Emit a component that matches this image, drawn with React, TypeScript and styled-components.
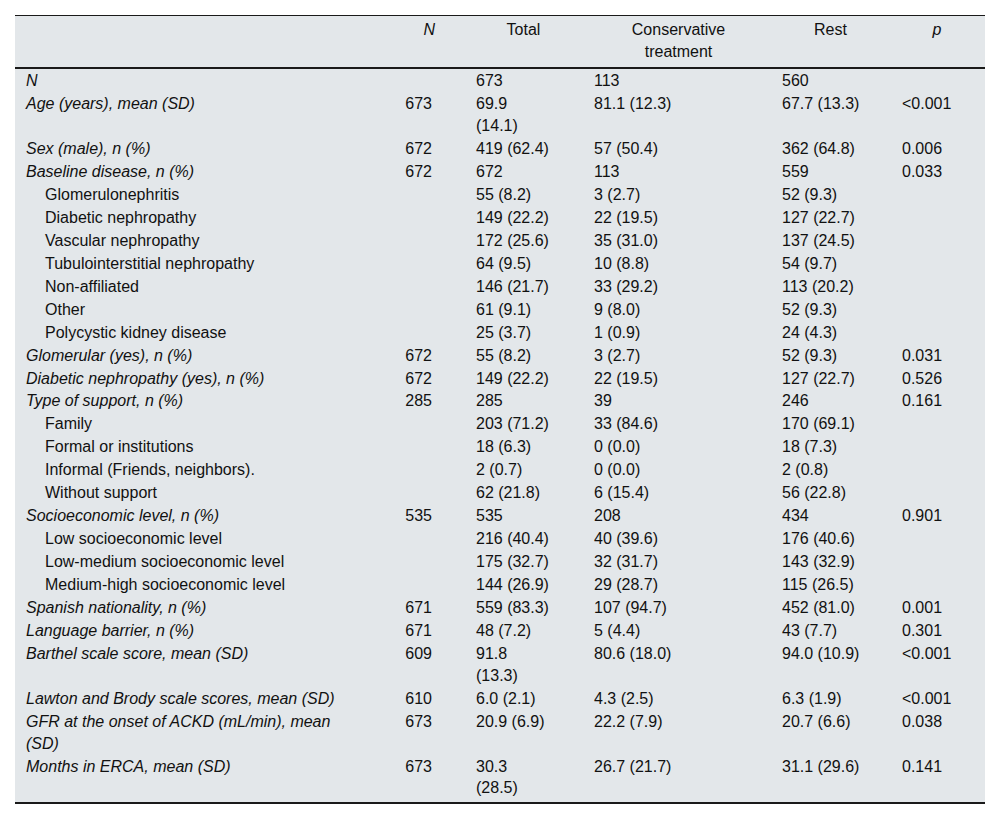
import React from "react";
import styled, { createGlobalStyle } from "styled-components";

const GlobalStyle = createGlobalStyle`
  html, body { margin: 0; padding: 0; background: #ffffff; }
  body { font-family: "Liberation Sans", Arial, Helvetica, sans-serif; }
`;

const Page = styled.div`
  padding: 15px 15px 0 15px;
`;

const TableBox = styled.div`
  background: #e3e7ea;
  border-top: 1px solid #1a1a1a;
  border-bottom: 2px solid #1a1a1a;
  padding-bottom: 2px;
`;

const Table = styled.table`
  width: 100%;
  table-layout: fixed;
  border-collapse: separate;
  border-spacing: 0;
  font-size: 16px;
  line-height: 21.7px;
  color: #111;
`;

const Th = styled.th<{ $italic?: boolean; $align?: "left" | "right" | "center"; $pr?: number }>`
  font-weight: normal;
  font-style: ${(p) => (p.$italic ? "italic" : "normal")};
  text-align: ${(p) => p.$align ?? "center"};
  vertical-align: top;
  padding: 3.15px ${(p) => p.$pr ?? 10}px 4.8px 0;
  border-bottom: 2px solid #1a1a1a;
`;

const Label = styled.td<{ $sub?: boolean; $italic?: boolean }>`
  font-style: ${(p) => (p.$italic ? "italic" : "normal")};
  padding: 0.65px 6px 0.65px ${(p) => (p.$sub ? "30px" : "11px")};
  vertical-align: top;
  white-space: nowrap;
`;

const NCell = styled.td`
  text-align: right;
  padding: 0.65px 38px 0.65px 0;
  vertical-align: top;
`;

const Val = styled.td`
  padding: 0.65px 4px 0.65px 6px;
  vertical-align: top;
  white-space: nowrap;
`;

type Row = {
  label: React.ReactNode;
  sub?: boolean;
  n?: string;
  total: React.ReactNode;
  cons: string;
  rest: string;
  p?: string;
};

const rows: Row[] = [
  { label: "N", total: "673", cons: "113", rest: "560" },
  { label: "Age (years), mean (SD)", n: "673", total: <>69.9<br />(14.1)</>, cons: "81.1 (12.3)", rest: "67.7 (13.3)", p: "<0.001" },
  { label: "Sex (male), n (%)", n: "672", total: "419 (62.4)", cons: "57 (50.4)", rest: "362 (64.8)", p: "0.006" },
  { label: "Baseline disease, n (%)", n: "672", total: "672", cons: "113", rest: "559", p: "0.033" },
  { label: "Glomerulonephritis", sub: true, total: "55 (8.2)", cons: "3 (2.7)", rest: "52 (9.3)" },
  { label: "Diabetic nephropathy", sub: true, total: "149 (22.2)", cons: "22 (19.5)", rest: "127 (22.7)" },
  { label: "Vascular nephropathy", sub: true, total: "172 (25.6)", cons: "35 (31.0)", rest: "137 (24.5)" },
  { label: "Tubulointerstitial nephropathy", sub: true, total: "64 (9.5)", cons: "10 (8.8)", rest: "54 (9.7)" },
  { label: "Non-affiliated", sub: true, total: "146 (21.7)", cons: "33 (29.2)", rest: "113 (20.2)" },
  { label: "Other", sub: true, total: "61 (9.1)", cons: "9 (8.0)", rest: "52 (9.3)" },
  { label: "Polycystic kidney disease", sub: true, total: "25 (3.7)", cons: "1 (0.9)", rest: "24 (4.3)" },
  { label: "Glomerular (yes), n (%)", n: "672", total: "55 (8.2)", cons: "3 (2.7)", rest: "52 (9.3)", p: "0.031" },
  { label: "Diabetic nephropathy (yes), n (%)", n: "672", total: "149 (22.2)", cons: "22 (19.5)", rest: "127 (22.7)", p: "0.526" },
  { label: "Type of support, n (%)", n: "285", total: "285", cons: "39", rest: "246", p: "0.161" },
  { label: "Family", sub: true, total: "203 (71.2)", cons: "33 (84.6)", rest: "170 (69.1)" },
  { label: "Formal or institutions", sub: true, total: "18 (6.3)", cons: "0 (0.0)", rest: "18 (7.3)" },
  { label: "Informal (Friends, neighbors).", sub: true, total: "2 (0.7)", cons: "0 (0.0)", rest: "2 (0.8)" },
  { label: "Without support", sub: true, total: "62 (21.8)", cons: "6 (15.4)", rest: "56 (22.8)" },
  { label: "Socioeconomic level, n (%)", n: "535", total: "535", cons: "208", rest: "434", p: "0.901" },
  { label: "Low socioeconomic level", sub: true, total: "216 (40.4)", cons: "40 (39.6)", rest: "176 (40.6)" },
  { label: "Low-medium socioeconomic level", sub: true, total: "175 (32.7)", cons: "32 (31.7)", rest: "143 (32.9)" },
  { label: "Medium-high socioeconomic level", sub: true, total: "144 (26.9)", cons: "29 (28.7)", rest: "115 (26.5)" },
  { label: "Spanish nationality, n (%)", n: "671", total: "559 (83.3)", cons: "107 (94.7)", rest: "452 (81.0)", p: "0.001" },
  { label: "Language barrier, n (%)", n: "671", total: "48 (7.2)", cons: "5 (4.4)", rest: "43 (7.7)", p: "0.301" },
  { label: "Barthel scale score, mean (SD)", n: "609", total: <>91.8<br />(13.3)</>, cons: "80.6 (18.0)", rest: "94.0 (10.9)", p: "<0.001" },
  { label: "Lawton and Brody scale scores, mean (SD)", n: "610", total: "6.0 (2.1)", cons: "4.3 (2.5)", rest: "6.3 (1.9)", p: "<0.001" },
  { label: <>GFR at the onset of ACKD (mL/min), mean<br />(SD)</>, n: "673", total: "20.9 (6.9)", cons: "22.2 (7.9)", rest: "20.7 (6.6)", p: "0.038" },
  { label: "Months in ERCA, mean (SD)", n: "673", total: <>30.3<br />(28.5)</>, cons: "26.7 (21.7)", rest: "31.1 (29.6)", p: "0.141" },
];

export default function App() {
  return (
    <>
      <GlobalStyle />
      <Page>
        <TableBox>
          <Table>
            <colgroup>
              <col style={{ width: 355 }} />
              <col style={{ width: 100 }} />
              <col style={{ width: 118 }} />
              <col style={{ width: 188 }} />
              <col style={{ width: 120 }} />
              <col style={{ width: 89 }} />
            </colgroup>
            <thead>
              <tr>
                <Th $align="left" />
                <Th $italic $align="right" $pr={35}>N</Th>
                <Th $pr={11}>Total</Th>
                <Th $pr={7}>Conservative<br />treatment</Th>
                <Th $pr={11}>Rest</Th>
                <Th $italic $pr={7}>p</Th>
              </tr>
            </thead>
            <tbody>
              {rows.map((r, i) => (
                <tr key={i}>
                  <Label $sub={r.sub} $italic={!r.sub}>{r.label}</Label>
                  <NCell>{r.n ?? ""}</NCell>
                  <Val>{r.total}</Val>
                  <Val>{r.cons}</Val>
                  <Val>{r.rest}</Val>
                  <Val>{r.p ?? ""}</Val>
                </tr>
              ))}
            </tbody>
          </Table>
        </TableBox>
      </Page>
    </>
  );
}
